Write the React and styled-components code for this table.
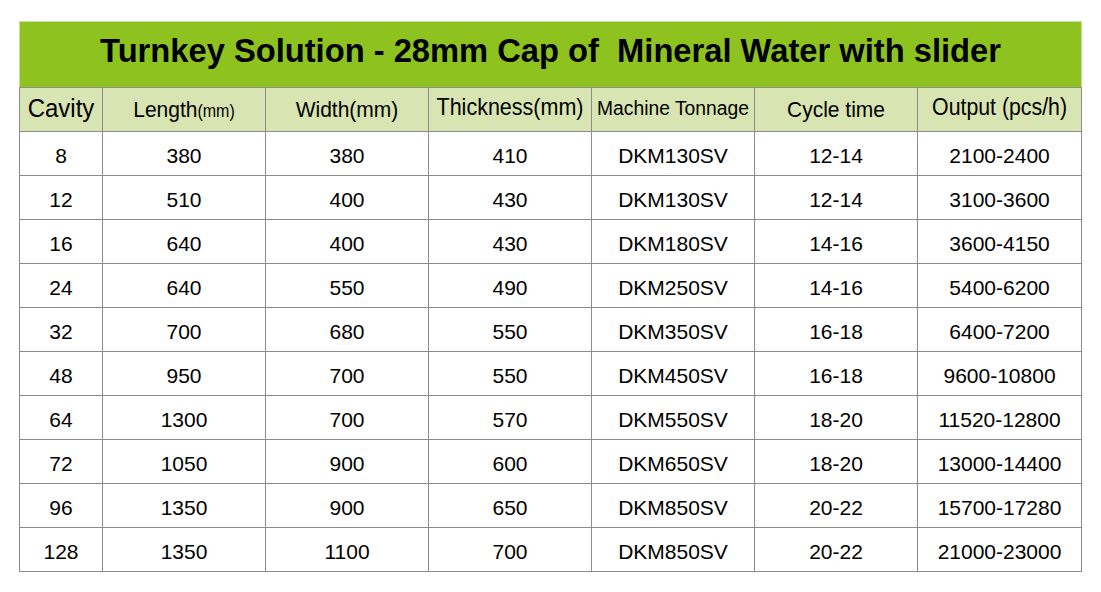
// Packages
import React from "react"
import styled, { createGlobalStyle } from "styled-components"

// Data
const headers = [
    { label: "Cavity", size: 24 },
    { label: "Length", unit: "(mm)", size: 21 },
    { label: "Width(mm)", size: 21 },
    { label: "Thickness(mm)", size: 21.5 },
    { label: "Machine Tonnage", size: 19.3 },
    { label: "Cycle time", size: 21 },
    { label: "Output (pcs/h)", size: 21.3 },
]

const rows = [
    ["8", "380", "380", "410", "DKM130SV", "12-14", "2100-2400"],
    ["12", "510", "400", "430", "DKM130SV", "12-14", "3100-3600"],
    ["16", "640", "400", "430", "DKM180SV", "14-16", "3600-4150"],
    ["24", "640", "550", "490", "DKM250SV", "14-16", "5400-6200"],
    ["32", "700", "680", "550", "DKM350SV", "16-18", "6400-7200"],
    ["48", "950", "700", "550", "DKM450SV", "16-18", "9600-10800"],
    ["64", "1300", "700", "570", "DKM550SV", "18-20", "11520-12800"],
    ["72", "1050", "900", "600", "DKM650SV", "18-20", "13000-14400"],
    ["96", "1350", "900", "650", "DKM850SV", "20-22", "15700-17280"],
    ["128", "1350", "1100", "700", "DKM850SV", "20-22", "21000-23000"],
]

// Styles
const GlobalStyle = createGlobalStyle`
    html, body {
        margin: 0;
        padding: 0;
        background: #ffffff;
        font-family: "Liberation Sans", Arial, sans-serif;
        color: #000000;
    }
`

const Page = styled.div`
    padding: 21px 0 0 19px;
`

const Table = styled.table`
    border-collapse: collapse;
    table-layout: fixed;
    width: 1063px;
`

const Col = styled.col`
    width: ${props => props.width}px;
`

const TitleCell = styled.th`
    box-sizing: border-box;
    height: 66px;
    padding: 0 0 6px;
    background-color: #8dc21f;
    border: 1px solid #c9dca0;
    border-bottom-color: #8c8c8c;
    font-size: 32.7px;
    line-height: 1;
    font-weight: bold;
    white-space: pre;
    text-align: center;
    vertical-align: middle;
`

const HeadCell = styled.th`
    box-sizing: border-box;
    height: 44px;
    padding: 0 0 3px;
    background-color: #d8e4b1;
    border: 1px solid #8c8c8c;
    font-size: ${props => props.size}px;
    line-height: 1;
    font-weight: normal;
    white-space: nowrap;
    overflow: hidden;
    text-align: center;
    vertical-align: middle;
`

const HeadText = styled.span`
    display: inline-block;
    transform: scaleY(1.09);
`

const Unit = styled.span`
    font-size: 16px;
`

const Cell = styled.td`
    box-sizing: border-box;
    height: 44px;
    padding: 3px 0 0;
    border: 1px solid #8c8c8c;
    font-size: 21px;
    line-height: 1;
    text-align: center;
    vertical-align: middle;
`

function App() {
    return (
        <Page>
            <GlobalStyle />
            <Table>
                <colgroup>
                    <Col width={83} />
                    <Col width={163} />
                    <Col width={163} />
                    <Col width={163} />
                    <Col width={163} />
                    <Col width={163} />
                    <Col width={164} />
                </colgroup>
                <thead>
                    <tr>
                        <TitleCell colSpan={7}>
                            {"Turnkey Solution - 28mm Cap of  Mineral Water with slider"}
                        </TitleCell>
                    </tr>
                    <tr>
                        {headers.map(h => (
                            <HeadCell key={h.label} size={h.size}>
                                <HeadText>
                                    {h.label}
                                    {h.unit && <Unit>{h.unit}</Unit>}
                                </HeadText>
                            </HeadCell>
                        ))}
                    </tr>
                </thead>
                <tbody>
                    {rows.map(row => (
                        <tr key={row[0]}>
                            {row.map((value, i) => (
                                <Cell key={i}>{value}</Cell>
                            ))}
                        </tr>
                    ))}
                </tbody>
            </Table>
        </Page>
    )
}

export default App
